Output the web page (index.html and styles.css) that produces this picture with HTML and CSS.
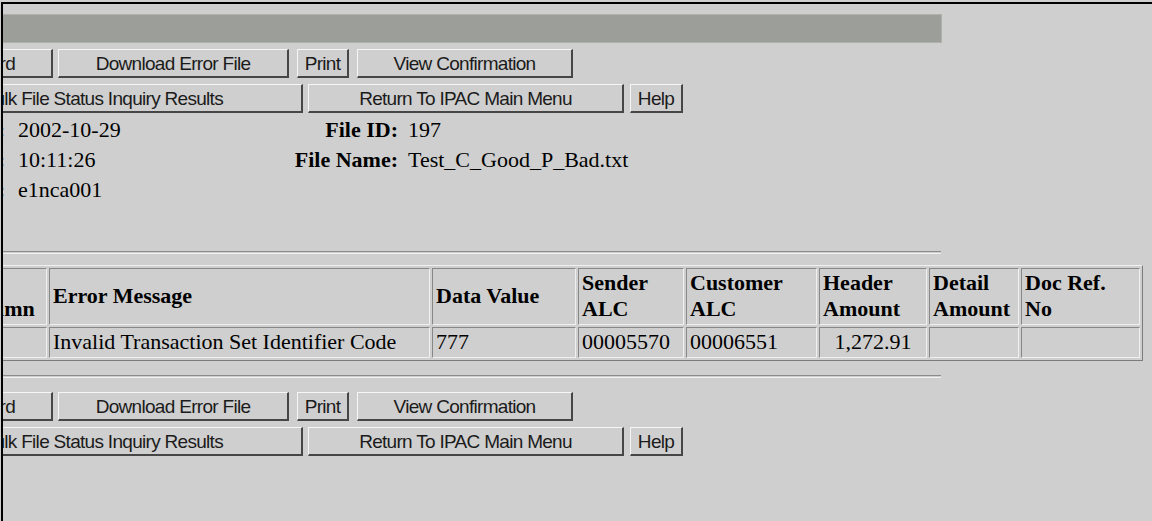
FILE: index.html
```html
<!DOCTYPE html>
<html lang="en">
<head>
<meta charset="utf-8">
<title>Bulk File Error Report</title>
<link rel="stylesheet" href="styles.css">
</head>
<body>
<div class="viewport">
  <div class="page">
    <div class="title-bar"></div>

    <form class="actions">
      <div class="btn-row">
        <button type="button" class="btn btn-prev">Previous Record</button>
        <button type="button" class="btn btn-download">Download Error File</button>
        <button type="button" class="btn btn-print">Print</button>
        <button type="button" class="btn btn-confirm">View Confirmation</button>
      </div>
      <div class="btn-row">
        <button type="button" class="btn btn-results">Return To Bulk File Status Inquiry Results</button>
        <button type="button" class="btn btn-menu">Return To IPAC Main Menu</button>
        <button type="button" class="btn btn-help">Help</button>
      </div>
    </form>

    <div class="file-info">
      <div class="info-label">Upload Date:</div>
      <div class="info-value">2002-10-29</div>
      <div class="info-label">File ID:</div>
      <div class="info-value info-value-2">197</div>

      <div class="info-label">Upload Time:</div>
      <div class="info-value">10:11:26</div>
      <div class="info-label">File Name:</div>
      <div class="info-value info-value-2">Test_C_Good_P_Bad.txt</div>

      <div class="info-label">User ID:</div>
      <div class="info-value">e1nca001</div>
      <div class="info-label"></div>
      <div class="info-value info-value-2"></div>
    </div>

    <hr class="rule rule-top">

    <table class="errors">
      <thead>
        <tr>
          <th class="c-record">Record</th>
          <th class="c-column">Column</th>
          <th class="c-message">Error Message</th>
          <th class="c-value">Data Value</th>
          <th class="c-sender">Sender ALC</th>
          <th class="c-customer">Customer ALC</th>
          <th class="c-header">Header Amount</th>
          <th class="c-detail">Detail Amount</th>
          <th class="c-docref">Doc Ref. No</th>
        </tr>
      </thead>
      <tbody>
        <tr>
          <td>1</td>
          <td></td>
          <td>Invalid Transaction Set Identifier Code</td>
          <td>777</td>
          <td>00005570</td>
          <td>00006551</td>
          <td class="amount">1,272.91</td>
          <td></td>
          <td></td>
        </tr>
      </tbody>
    </table>

    <hr class="rule rule-bottom">

    <form class="actions actions-bottom">
      <div class="btn-row">
        <button type="button" class="btn btn-prev">Previous Record</button>
        <button type="button" class="btn btn-download">Download Error File</button>
        <button type="button" class="btn btn-print">Print</button>
        <button type="button" class="btn btn-confirm">View Confirmation</button>
      </div>
      <div class="btn-row">
        <button type="button" class="btn btn-results">Return To Bulk File Status Inquiry Results</button>
        <button type="button" class="btn btn-menu">Return To IPAC Main Menu</button>
        <button type="button" class="btn btn-help">Help</button>
      </div>
    </form>
  </div>
</div>
</body>
</html>
```

FILE: styles.css
```css
html, body {
  margin: 0;
  padding: 0;
  background: #cfcfcf;
  overflow: hidden;
}

/* browser content area, scrolled sideways */
.viewport {
  margin: 2px 0 0 1px;
  border-top: 2px solid #000;
  border-left: 2px solid #000;
  height: 517px;
  overflow: hidden;
}

.page {
  box-sizing: border-box;
  width: 1400px;
  margin-left: -200px;
  padding-left: 8px;
  font-family: "Liberation Serif", "Times New Roman", serif;
  font-size: 22px;
  color: #000;
}

.title-bar {
  box-sizing: border-box;
  width: 1131px;
  height: 29px;
  margin-top: 10px;
  background: #9c9e9a;
  border: 1px solid #afb1ad;
}

/* button rows */
.actions {
  margin: 6px 0 0;
}

.btn-row {
  display: flex;
}

.btn-row + .btn-row {
  margin-top: 6px;
}

.btn {
  box-sizing: border-box;
  height: 29px;
  margin: 0;
  padding: 2px 0 0;
  font-family: "Liberation Sans", Arial, sans-serif;
  font-size: 19px;
  letter-spacing: -0.7px;
  line-height: 24px;
  color: #1b1b1b;
  background: #cfcfcf;
  border-style: solid;
  border-width: 1px 2px 2px 1px;
  border-color: #f6f6f6 #464646 #464646 #f6f6f6;
  border-radius: 0;
  text-align: center;
  white-space: nowrap;
  overflow: hidden;
}

.btn + .btn { margin-left: 5px; }

.btn-prev     { width: 242px; text-align: right; padding-right: 36px; }
.btn-download { width: 231px; }
.btn-print    { width: 52px; margin-left: 8px !important; }
.btn-confirm  { width: 216px; margin-left: 8px !important; }
.btn-results  { width: 492px; text-align: right; padding-right: 78px; }
.btn-menu     { width: 316px; }
.btn-help     { width: 53px; margin-left: 6px !important; }

/* upload details */
.file-info {
  display: grid;
  grid-template-columns: 194px 258px 135px auto;
  margin-top: 2px;
  line-height: 30px;
  height: 90px;
}

.info-label {
  font-weight: bold;
  text-align: right;
  white-space: nowrap;
}

.info-value {
  padding-left: 13px;
  white-space: nowrap;
}

.info-value-2 {
  padding-left: 10px;
}

/* engraved rules */
.rule {
  box-sizing: content-box;
  width: 1130px;
  height: 1px;
  margin: 0;
  border: none;
  border-top: 1px solid #8c8c8c;
  border-bottom: 1px solid #f0f0f0;
}

.rule-top { margin-top: 46px; }
.rule-bottom { margin-top: 14px; }

/* error table */
.errors {
  table-layout: fixed;
  width: 1332px;
  margin-top: 11px;
  border-collapse: separate;
  border-spacing: 2px;
  border-style: solid;
  border-width: 1px;
  border-color: #f0f0f0 #7c7c7c #7c7c7c #f0f0f0;
  line-height: 26px;
}

.errors th,
.errors td {
  box-sizing: border-box;
  padding: 1px 3px 2px;
  border-style: solid;
  border-width: 1px;
  border-color: #878787 #f0f0f0 #f0f0f0 #878787;
  text-align: left;
  vertical-align: middle;
  font-size: 22px;
}

.errors th { font-weight: bold; }

.errors th.c-column { vertical-align: bottom; }

.c-record   { width: 139px; }
.c-column   { width: 92px; }
.c-message  { width: 381px; }
.c-value    { width: 144px; }
.c-sender   { width: 106px; }
.c-customer { width: 131px; }
.c-header   { width: 108px; }
.c-detail   { width: 90px; }
.c-docref   { width: 119px; }

.errors td.amount { text-align: center; }

.actions-bottom { margin-top: 14px; }
```
